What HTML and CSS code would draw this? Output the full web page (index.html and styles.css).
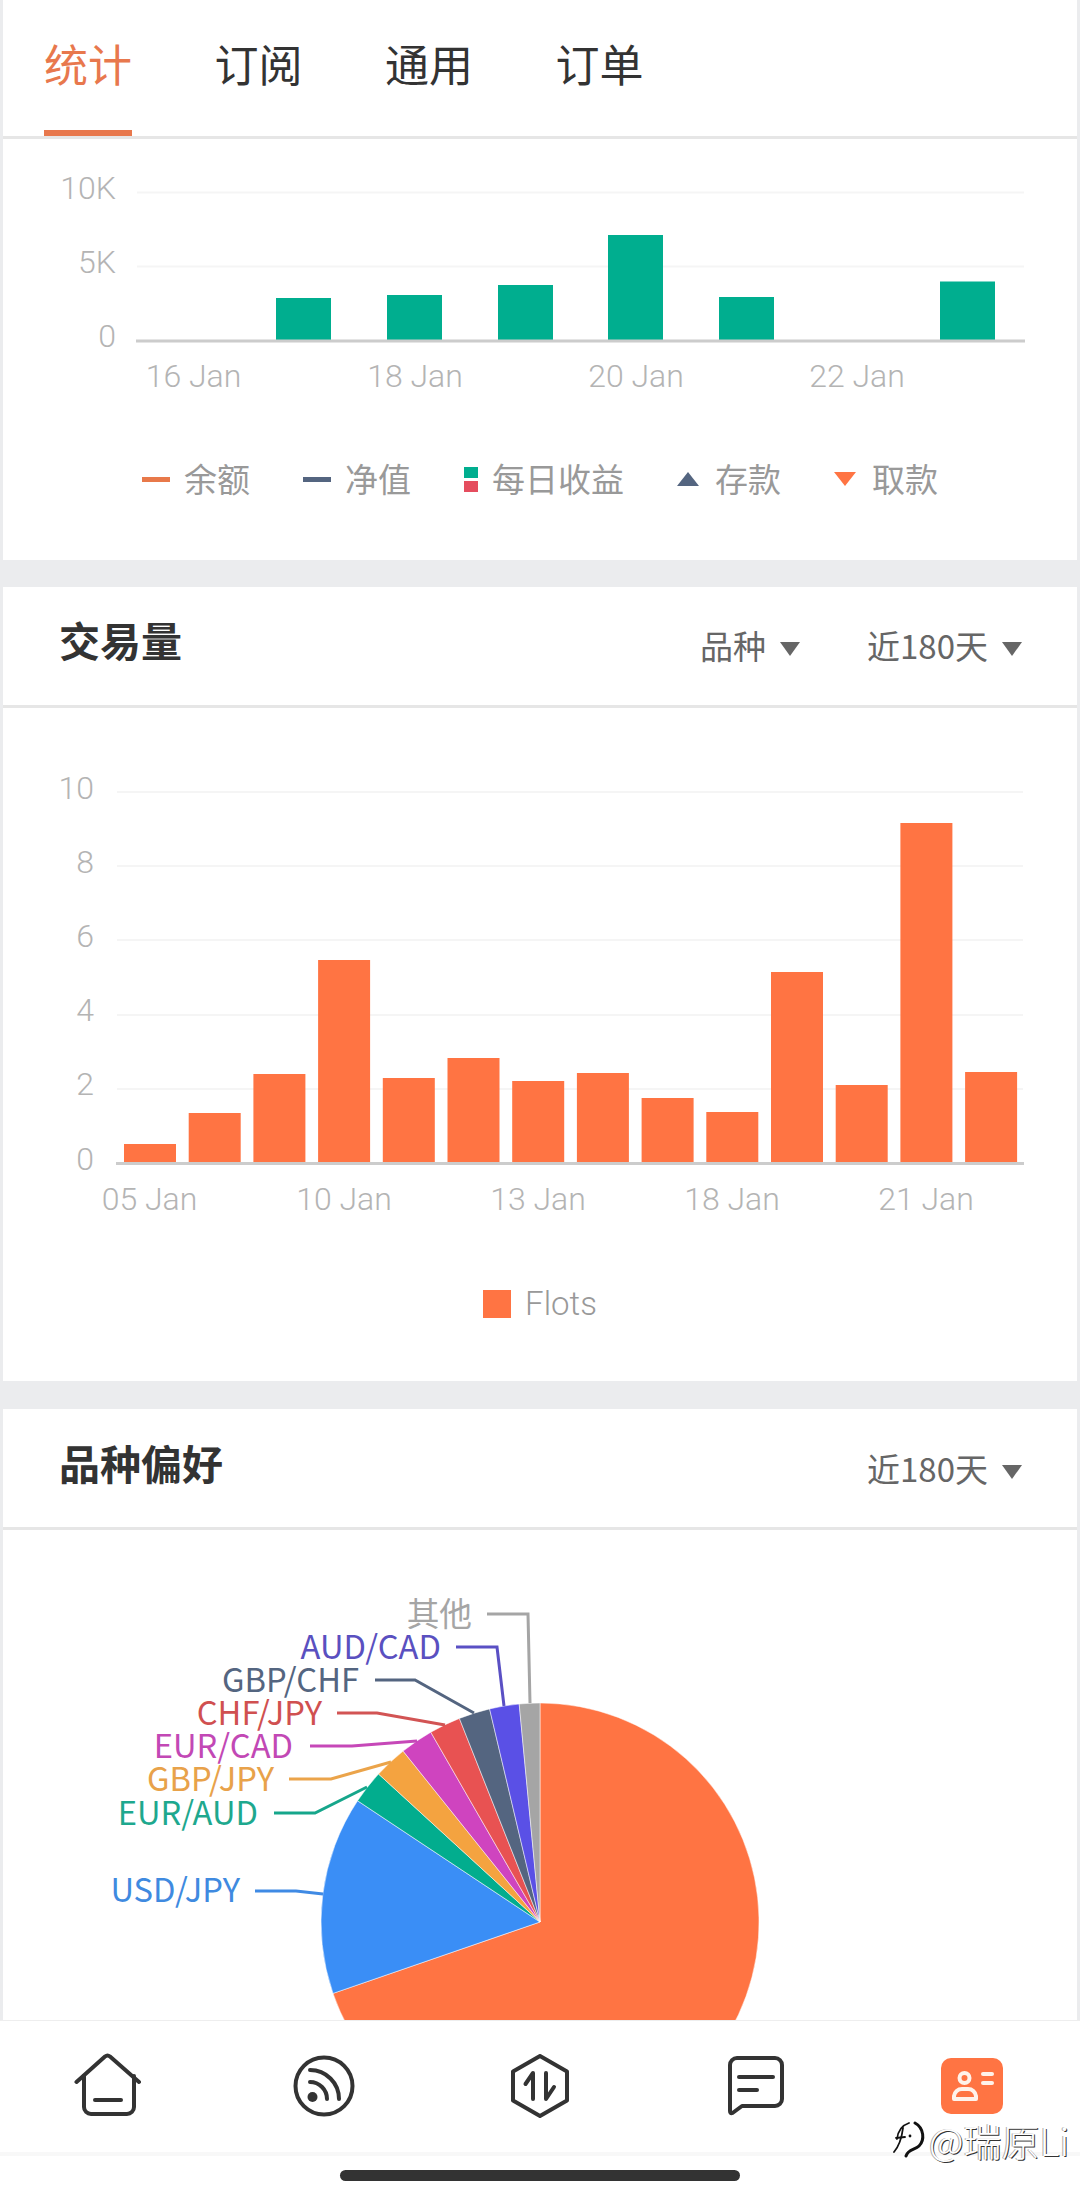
FILE: index.html
```html
<!DOCTYPE html>
<html lang="zh-CN">
<head>
    <meta charset="UTF-8">
    <meta name="viewport" content="width=device-width, initial-scale=1.0">
    <title>统计</title>
    <link rel="stylesheet" href="styles.css">
</head>
<body>

<div class="tabs">
    <div class="tab active">统计</div>
    <div class="tab">订阅</div>
    <div class="tab">通用</div>
    <div class="tab">订单</div>
</div>

<!-- 每日收益 -->
<section class="card card-income">
    <svg class="chart" width="1074" height="270" viewBox="3 139 1074 270">
        <line class="grid" x1="137" y1="192.5" x2="1024" y2="192.5"/>
        <line class="grid" x1="137" y1="266.5" x2="1024" y2="266.5"/>
        <g class="bars-green">
            <rect x="276" y="298" width="55" height="43"/>
            <rect x="387" y="295" width="55" height="46"/>
            <rect x="498" y="285" width="55" height="56"/>
            <rect x="608" y="235" width="55" height="106"/>
            <rect x="719" y="297" width="55" height="44"/>
            <rect x="940" y="281.5" width="55" height="59.5"/>
        </g>
        <line class="axis" x1="136" y1="341" x2="1025" y2="341"/>
        <g class="tick tick-y">
            <text x="116" y="199">10K</text>
            <text x="116" y="273">5K</text>
            <text x="116" y="347">0</text>
        </g>
        <g class="tick tick-x">
            <text x="193.5" y="387">16 Jan</text>
            <text x="415" y="387">18 Jan</text>
            <text x="636" y="387">20 Jan</text>
            <text x="857" y="387">22 Jan</text>
        </g>
    </svg>
    <div class="legend">
        <div class="legend-item"><span class="mark-line orange"></span>余额</div>
        <div class="legend-item"><span class="mark-line slate"></span>净值</div>
        <div class="legend-item"><span class="mark-pair"><i></i><i></i></span>每日收益</div>
        <div class="legend-item"><span class="mark-up"></span>存款</div>
        <div class="legend-item"><span class="mark-down"></span>取款</div>
    </div>
</section>

<!-- 交易量 -->
<section class="card card-volume">
    <div class="card-head">
        <h2>交易量</h2>
        <div class="filters">
            <div class="filter">品种<span class="caret"></span></div>
            <div class="filter">近180天<span class="caret"></span></div>
        </div>
    </div>
    <svg class="chart" width="1074" height="532" viewBox="3 708 1074 532">
        <line class="grid" x1="117" y1="792" x2="1023" y2="792"/>
        <line class="grid" x1="117" y1="866" x2="1023" y2="866"/>
        <line class="grid" x1="117" y1="940" x2="1023" y2="940"/>
        <line class="grid" x1="117" y1="1015" x2="1023" y2="1015"/>
        <line class="grid" x1="117" y1="1089" x2="1023" y2="1089"/>
        <g class="bars-orange">
            <rect x="124" y="1144" width="52" height="19"/>
            <rect x="188.7" y="1113" width="52" height="50"/>
            <rect x="253.4" y="1074" width="52" height="89"/>
            <rect x="318.1" y="960" width="52" height="203"/>
            <rect x="382.8" y="1078" width="52" height="85"/>
            <rect x="447.5" y="1058" width="52" height="105"/>
            <rect x="512.2" y="1081" width="52" height="82"/>
            <rect x="576.9" y="1073" width="52" height="90"/>
            <rect x="641.6" y="1098" width="52" height="65"/>
            <rect x="706.3" y="1112" width="52" height="51"/>
            <rect x="771" y="972" width="52" height="191"/>
            <rect x="835.7" y="1085" width="52" height="78"/>
            <rect x="900.4" y="823" width="52" height="340"/>
            <rect x="965.1" y="1072" width="52" height="91"/>
        </g>
        <line class="axis" x1="116" y1="1163.5" x2="1024" y2="1163.5"/>
        <g class="tick tick-y">
            <text x="94" y="799">10</text>
            <text x="94" y="873">8</text>
            <text x="94" y="947">6</text>
            <text x="94" y="1021">4</text>
            <text x="94" y="1095">2</text>
            <text x="94" y="1170">0</text>
        </g>
        <g class="tick tick-x">
            <text x="149.5" y="1210">05 Jan</text>
            <text x="344" y="1210">10 Jan</text>
            <text x="538" y="1210">13 Jan</text>
            <text x="732" y="1210">18 Jan</text>
            <text x="926" y="1210">21 Jan</text>
        </g>
    </svg>
    <div class="legend">
        <div class="legend-item flots"><span class="mark-square"></span>Flots</div>
    </div>
</section>

<!-- 品种偏好 -->
<section class="card card-pie">
    <div class="card-head">
        <h2>品种偏好</h2>
        <div class="filters">
            <div class="filter">近180天<span class="caret"></span></div>
        </div>
    </div>
    <svg class="chart" width="1074" height="560" viewBox="3 1530 1074 560">
        <g class="slices">
            <path fill="#ff7443" d="M540 1922 L540 1703 A219 219 0 1 1 333 1993.4 Z"/>
            <path fill="#3a8ef6" d="M540 1922 L333 1993.4 A219 219 0 0 1 357.6 1800.8 Z"/>
            <path fill="#02ad8e" d="M540 1922 L357.6 1800.8 A219 219 0 0 1 378.5 1774 Z"/>
            <path fill="#f4a340" d="M540 1922 L378.5 1774 A219 219 0 0 1 403.1 1751.1 Z"/>
            <path fill="#cf44bf" d="M540 1922 L403.1 1751.1 A219 219 0 0 1 430.8 1732.2 Z"/>
            <path fill="#e85252" d="M540 1922 L430.8 1732.2 A219 219 0 0 1 459.4 1718.4 Z"/>
            <path fill="#546580" d="M540 1922 L459.4 1718.4 A219 219 0 0 1 489.6 1708.9 Z"/>
            <path fill="#5a50e6" d="M540 1922 L489.6 1708.9 A219 219 0 0 1 519.2 1704 Z"/>
            <path fill="#a5a5a5" d="M540 1922 L519.2 1704 A219 219 0 0 1 540 1703 Z"/>
        </g>
        <g class="leaders">
            <polyline stroke="#a5a5a5" points="487,1614 528,1614 530,1703"/>
            <polyline stroke="#5a50c4" points="456,1647 497,1647 504,1706"/>
            <polyline stroke="#546580" points="375,1680 415,1680 474,1713"/>
            <polyline stroke="#d25454" points="337,1713 377,1713 445,1725"/>
            <polyline stroke="#c648b8" points="310,1746 352,1746 417,1741"/>
            <polyline stroke="#eba44a" points="289,1779 331,1779 391,1762"/>
            <polyline stroke="#16a68b" points="274,1813 315,1813 367,1787"/>
            <polyline stroke="#3f8ae4" points="255,1891 296,1891 323,1894"/>
        </g>
        <g class="pie-label">
            <text x="472" y="1626" fill="#a5a5a5">其他</text>
            <text x="441" y="1659" fill="#5a50c0">AUD/CAD</text>
            <text x="359" y="1692" fill="#546580">GBP/CHF</text>
            <text x="322" y="1725" fill="#d05050">CHF/JPY</text>
            <text x="293" y="1758" fill="#c248b5">EUR/CAD</text>
            <text x="274" y="1791" fill="#e8a24a">GBP/JPY</text>
            <text x="258" y="1825" fill="#1ea88e">EUR/AUD</text>
            <text x="240" y="1902" fill="#3f8ae0">USD/JPY</text>
        </g>
    </svg>
</section>

<!-- 底部导航 -->
<nav class="bottom-nav">
    <div class="nav-row">
        <div class="nav-cell">
            <svg class="nav-icon" width="68" height="66" viewBox="0 0 68 66">
                <path d="M2.5 29 L31 3.5 q2.5 -2 5 0 L65 29"/>
                <path d="M10 23 V54 a7 7 0 0 0 7 7 H53 a7 7 0 0 0 7 -7 V23"/>
                <path d="M21 47 H47"/>
            </svg>
        </div>
        <div class="nav-cell">
            <svg class="nav-icon" width="62" height="62" viewBox="0 0 62 62">
                <circle cx="31" cy="31" r="28.5"/>
                <path d="M17 27 A17 17 0 0 1 34 44"/>
                <path d="M17 15 A29 29 0 0 1 46 44"/>
                <circle class="dot" cx="19.5" cy="42" r="5"/>
            </svg>
        </div>
        <div class="nav-cell">
            <svg class="nav-icon" width="58" height="64" viewBox="0 0 58 64">
                <path d="M29 2 L56 17.5 V46.5 L29 62 L2 46.5 V17.5 Z"/>
                <path d="M22 45 V19 L14.5 30"/>
                <path d="M35 19 V45 L43 33"/>
            </svg>
        </div>
        <div class="nav-cell">
            <svg class="nav-icon" width="56" height="60" viewBox="0 0 56 60">
                <path d="M9 2 H47 a7 7 0 0 1 7 7 V43 a7 7 0 0 1 -7 7 H14 L4.5 57 Q2 58 2 55 V9 a7 7 0 0 1 7 -7 Z"/>
                <path d="M11 21 H45"/>
                <path d="M11 34 H29"/>
            </svg>
        </div>
        <div class="nav-cell">
            <svg class="nav-icon nav-active" width="62" height="56" viewBox="0 0 62 56">
                <rect class="plate" width="62" height="56" rx="10"/>
                <circle cx="23.5" cy="20" r="5"/>
                <path d="M13 41 v-3 a8 8 0 0 1 8 -7 h6 a8 8 0 0 1 8 7 v3 Z"/>
                <path d="M42 16 H51"/>
                <path d="M42 25 H51"/>
            </svg>
        </div>
    </div>
    <div class="nav-line"></div>
    <div class="home-bar"></div>
</nav>

<!-- 水印 -->
<div class="watermark">
    <svg width="34" height="40" viewBox="0 0 34 40">
        <path class="thin" d="M4 19 C5 10 10 5 16 3"/>
        <path class="thin" d="M10 8 C9 16 7 25 1 32"/>
        <path class="thin" d="M3 18 L12 17"/>
        <path d="M22 3 C31 8 32 20 26 26 C22 30 15 29 13 36"/>
        <circle cx="17" cy="16" r="1.4"/>
    </svg>
    <span>@瑞原Li</span>
</div>

</body>
</html>
```

FILE: styles.css
```css
* {
    box-sizing: border-box;
}

html, body {
    margin: 0;
    padding: 0;
}

body {
    position: relative;
    height: 2198px;
    overflow: hidden;
    background-color: #ebecee;
    font-family: "Noto Sans CJK SC", "Noto Sans", sans-serif;
    color: #333333;
}

/* tabs */
.tabs {
    display: flex;
    gap: 82.5px;
    height: 139px;
    margin: 0 3px;
    padding-left: 41px;
    background-color: #ffffff;
    border-bottom: 3px solid #e6e6e6;
}

.tab {
    width: 88px;
    height: 136px;
    padding-top: 31px;
    font-size: 44px;
    line-height: 64px;
    text-align: center;
    white-space: nowrap;
}

.tab.active {
    color: #e8784d;
    border-bottom: 6px solid #e8784d;
}

/* cards */
.card {
    margin: 0 3px 27px;
    background-color: #ffffff;
}

.card-income {
    height: 421px;
}

.card-volume {
    height: 794px;
    margin-bottom: 28px;
}

.card-head {
    display: flex;
    justify-content: space-between;
    align-items: center;
    height: 121px;
    padding: 0 55px 0 56px;
    border-bottom: 3px solid #e6e6e6;
}

.card-pie .card-head {
    padding-top: 2px;
}

.card-head h2 {
    margin: 0 0 14px;
    font-size: 41px;
    font-weight: 700;
    line-height: 56px;
}

.filters {
    display: flex;
    gap: 67px;
    margin-bottom: 3px;
}

.filter {
    display: flex;
    align-items: center;
    font-size: 33px;
    line-height: 46px;
    color: #666666;
}

.caret {
    width: 0;
    height: 0;
    margin: 8px 0 0 14px;
    border-left: 10.5px solid transparent;
    border-right: 10.5px solid transparent;
    border-top: 14px solid #666666;
}

/* charts */
.chart {
    display: block;
}

.grid {
    stroke: #f5f5f5;
    stroke-width: 2;
}

.axis {
    stroke: #cccccc;
    stroke-width: 3;
}

.bars-green {
    fill: #00ae8f;
}

.bars-orange {
    fill: #ff7443;
}

.tick {
    font-family: Roboto, sans-serif;
    font-size: 32px;
    font-weight: 300;
    fill: #b4b4b4;
}

.tick-y {
    text-anchor: end;
}

.tick-x {
    text-anchor: middle;
}

.slices path {
    stroke: #ffffff;
    stroke-width: 0.5;
}

.leaders polyline {
    fill: none;
    stroke-width: 3;
}

.pie-label {
    font-size: 32.7px;
    text-anchor: end;
}

/* legends */
.legend {
    display: flex;
    justify-content: center;
    gap: 53px;
    height: 46px;
    margin-top: 46px;
    font-size: 33px;
    line-height: 46px;
    color: #999999;
}

.card-volume .legend {
    margin-top: 41px;
}

.legend-item {
    display: flex;
    align-items: center;
}

.flots {
    font-family: Roboto, sans-serif;
    font-weight: 300;
}

.mark-line {
    width: 28px;
    height: 5px;
    margin: 2px 14px 0 0;
}

.mark-line.orange {
    background-color: #e8794a;
}

.mark-line.slate {
    background-color: #546580;
}

.mark-pair {
    display: flex;
    flex-direction: column;
    gap: 3px;
    margin: 2px 14px 0 0;
}

.mark-pair i {
    display: block;
    width: 14px;
    height: 11px;
    background-color: #00ae8f;
}

.mark-pair i + i {
    background-color: #e54d5e;
}

.mark-up,
.mark-down {
    width: 0;
    height: 0;
    margin: 2px 16px 0 0;
    border-left: 11px solid transparent;
    border-right: 11px solid transparent;
}

.mark-up {
    border-bottom: 14px solid #546580;
}

.mark-down {
    border-top: 14px solid #ff7443;
}

.mark-square {
    width: 28px;
    height: 28px;
    margin-right: 14px;
    background-color: #ff7443;
}

/* bottom nav */
.bottom-nav {
    position: absolute;
    left: 0;
    right: 0;
    bottom: 0;
    height: 178px;
    background-color: #ffffff;
    border-top: 1px solid #eeeeee;
}

.nav-row {
    display: flex;
    height: 131px;
    padding-bottom: 2px;
}

.nav-cell {
    display: flex;
    flex: 1;
    align-items: center;
    justify-content: center;
}

.nav-icon {
    fill: none;
    stroke: #333333;
    stroke-width: 4;
    stroke-linecap: round;
    stroke-linejoin: round;
}

.nav-icon .dot {
    fill: #333333;
    stroke: none;
}

.nav-active {
    stroke: #fff2ea;
}

.nav-active .plate {
    fill: #ff7443;
    stroke: none;
}

.nav-line {
    height: 4px;
    background-color: #f8f8f8;
}

.home-bar {
    width: 400px;
    height: 11px;
    margin: 14px auto 0;
    border-radius: 6px;
    background-color: #333333;
}

/* watermark */
.watermark {
    position: absolute;
    left: 893px;
    top: 2118px;
    display: flex;
    align-items: center;
    gap: 2px;
    font-family: "Noto Sans CJK SC", sans-serif;
    font-size: 38px;
    font-weight: 300;
    line-height: 44px;
    color: #ffffff;
    text-shadow: 1px 1px 0 #333333, -1px 0 0 #aaaaaa;
}

.watermark svg {
    fill: none;
    stroke: #111111;
    stroke-width: 3;
    stroke-linecap: round;
}

.watermark svg .thin {
    stroke-width: 1.8;
}

.watermark svg circle {
    fill: #111111;
    stroke: none;
}
```
